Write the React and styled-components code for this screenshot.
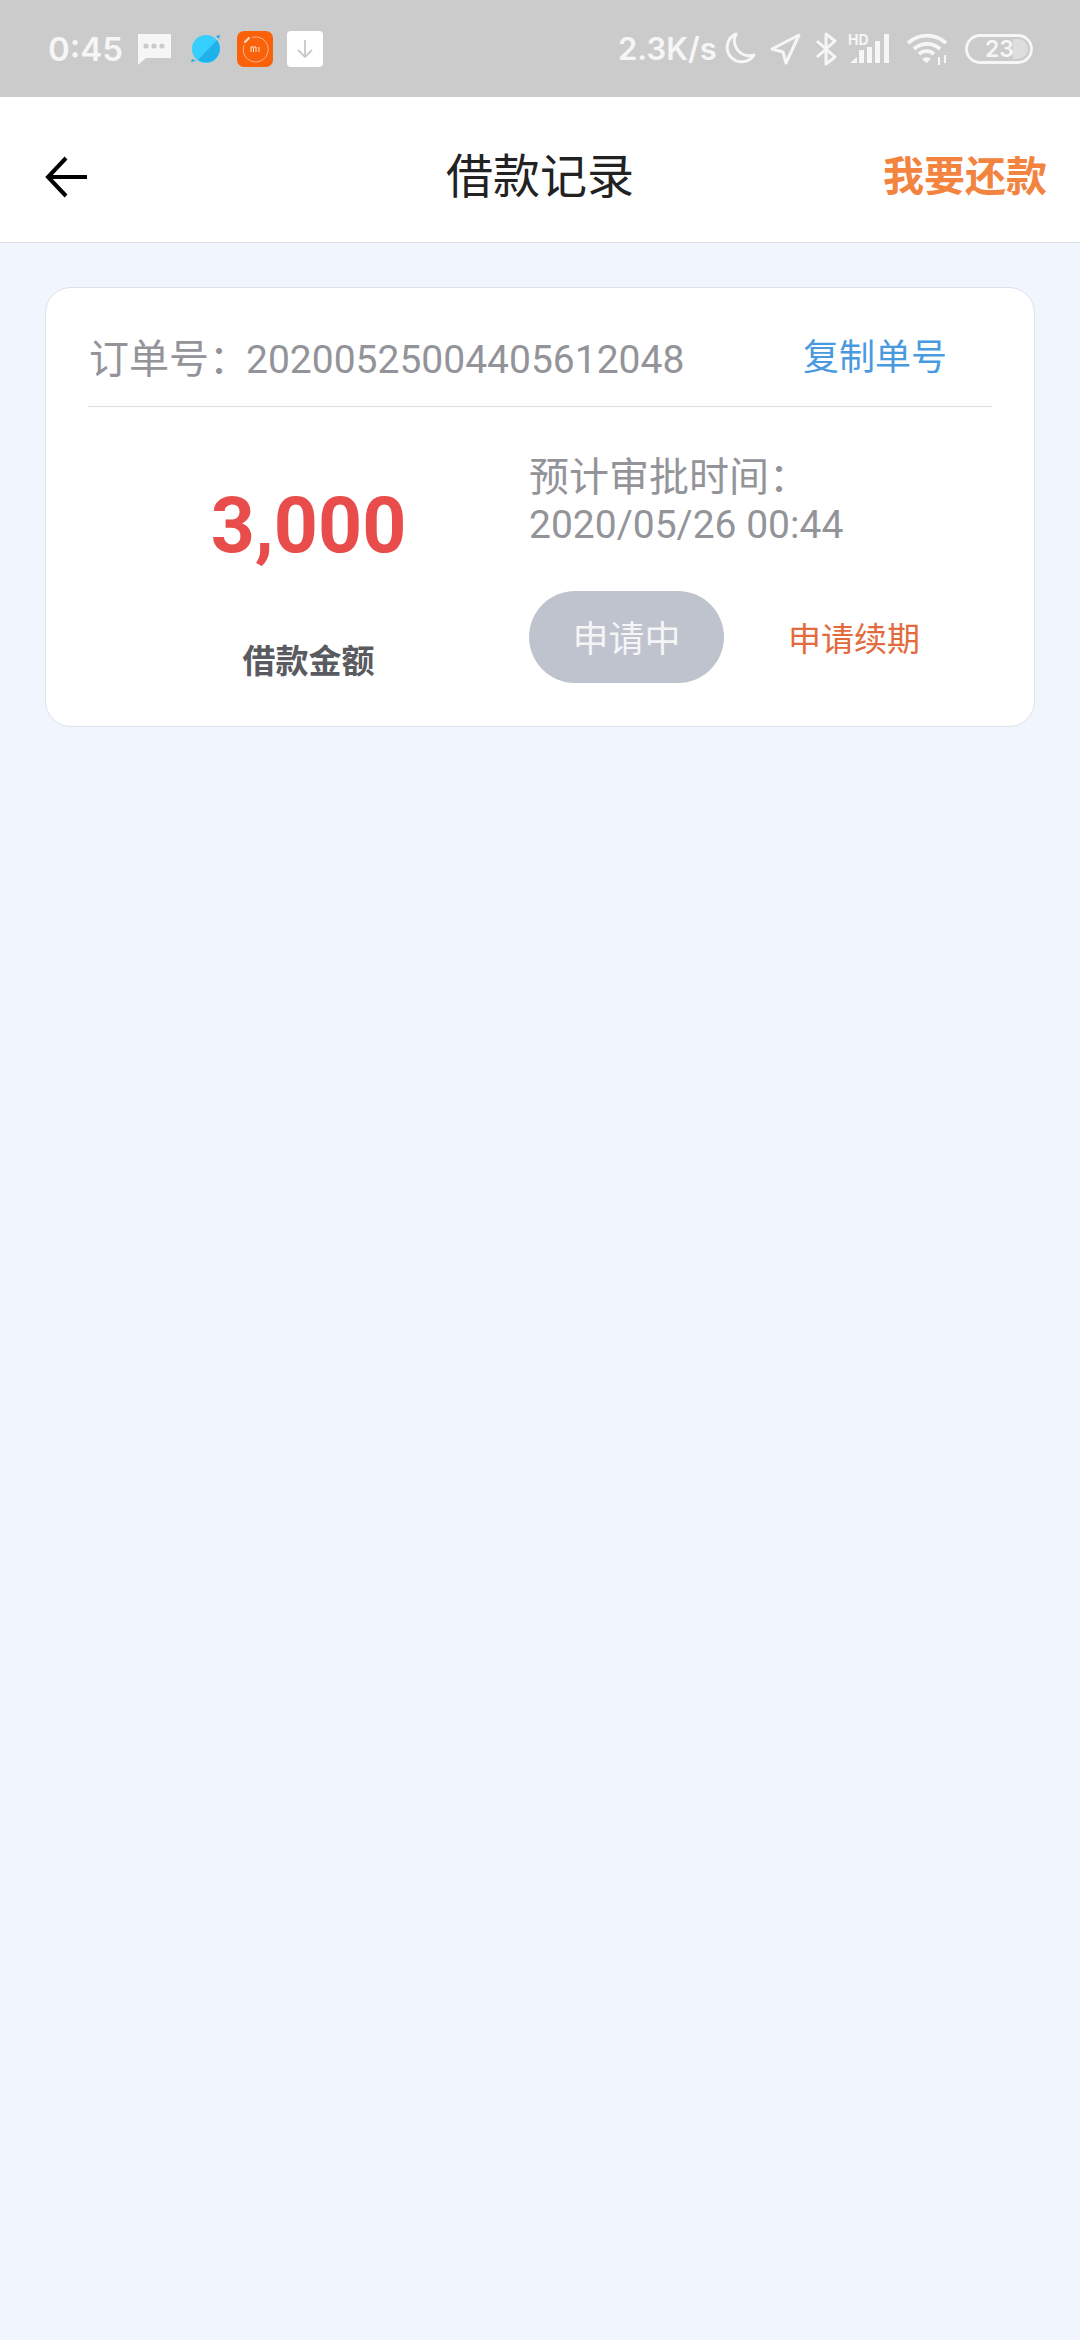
import React from "react";
import styled, { createGlobalStyle } from "styled-components";

const FONT = `Roboto, "Noto Sans CJK SC", sans-serif`;

const GlobalStyle = createGlobalStyle`
	html, body {
		margin: 0;
		padding: 0;
		background: #f1f5fd;
		font-family: ${FONT};
	}
`;

const S = {
	Page: styled.div`
		width: 1080px;
		height: 2340px;
		overflow: hidden;
		background: #f1f5fd;
		display: flex;
		flex-direction: column;
	`,
	StatusBar: styled.div`
		height: 97px;
		flex: none;
		padding: 0 47px 0 48px;
		box-sizing: border-box;
		background: #cbcbcb;
		display: flex;
		align-items: center;
		justify-content: space-between;
		color: #f6f6f6;
	`,
	StatusGroup: styled.div`
		display: flex;
		align-items: center;
	`,
	Time: styled.span`
		font: 600 33px Inter, sans-serif;
		width: 72px;
	`,
	Speed: styled.span`
		font: 600 31px Inter, sans-serif;
		width: 95px;
		white-space: nowrap;
	`,
	Glyph: styled.svg`
		flex: none;
		display: block;
		overflow: visible;
		margin-left: ${(p) => p.$left || 0}px;
	`,
	Header: styled.div`
		height: 146px;
		flex: none;
		box-sizing: border-box;
		padding: 6px 33px 0;
		background: #fff;
		border-bottom: 1px solid #dcdde4;
		display: grid;
		grid-template-columns: 1fr auto 1fr;
		align-items: center;
	`,
	BackButton: styled.div`
		display: flex;
		align-items: center;
		margin: 9px 0 0 11px;
	`,
	Title: styled.div`
		font-size: 47px;
		color: #222;
	`,
	RepayLink: styled.div`
		justify-self: end;
		font-size: 41px;
		font-weight: 700;
		color: #f3843f;
	`,
	Content: styled.div`
		padding: 44px 45px;
	`,
	Card: styled.div`
		height: 440px;
		box-sizing: border-box;
		padding: 0 42px;
		background: #fff;
		border: 1px solid #dfe1e8;
		border-radius: 26px;
		display: flex;
		flex-direction: column;
	`,
	OrderRow: styled.div`
		height: 119px;
		flex: none;
		box-sizing: border-box;
		padding: 18px 45px 0 1px;
		border-bottom: 1px solid #dfe0e4;
		display: flex;
		align-items: center;
		justify-content: space-between;
	`,
	OrderNo: styled.div`
		font-size: 40px;
		color: #939499;
		white-space: nowrap;
		span {
			font-size: 39px;
			margin-left: -3px;
		}
	`,
	CopyLink: styled.div`
		font-size: 36px;
		color: #4a9ae0;
		margin-top: -4px;
	`,
	CardBody: styled.div`
		flex: 1;
		display: grid;
		grid-template-columns: 441px 1fr;
	`,
	AmountCol: styled.div`
		display: flex;
		flex-direction: column;
		align-items: center;
		padding-top: 72px;
	`,
	Amount: styled.div`
		font-size: 77px;
		line-height: 94px;
		font-weight: 700;
		color: #e84c4b;
	`,
	AmountLabel: styled.div`
		margin-top: 66px;
		font-size: 33px;
		line-height: 46px;
		font-weight: 700;
		color: #5a5b60;
	`,
	InfoCol: styled.div`
		display: flex;
		flex-direction: column;
		padding-top: 47px;
	`,
	InfoText: styled.div`
		font-size: ${(p) => p.$size || 40}px;
		line-height: ${(p) => p.$line || 48}px;
		color: #939499;
	`,
	ActionRow: styled.div`
		display: flex;
		align-items: center;
		gap: 64px;
		margin-top: 42px;
	`,
	StatusPill: styled.div`
		width: 195px;
		height: 92px;
		flex: none;
		border-radius: 46px;
		background: #bfc3cd;
		color: #f4f5f7;
		font-size: 36px;
		padding-bottom: 2px;
		box-sizing: border-box;
		display: flex;
		align-items: center;
		justify-content: center;
	`,
	RenewLink: styled.div`
		font-size: 33px;
		color: #e26a3c;
	`,
};

const White = "#f6f6f6";

function NotificationIcons() {
	return (
		<S.StatusGroup>
			<S.Time>0:45</S.Time>
			<S.Glyph $left={17} width="34" height="32" viewBox="0 0 34 32">
				<path d="M1 1h33v24H9l-8 7z" fill={White} />
				<circle cx="9" cy="13" r="2.6" fill="#cbcbcb" />
				<circle cx="17" cy="13" r="2.6" fill="#cbcbcb" />
				<circle cx="25" cy="13" r="2.6" fill="#cbcbcb" />
			</S.Glyph>
			<S.Glyph $left={19} width="32" height="30" viewBox="0 0 32 30">
				<circle cx="16" cy="15" r="14" fill="#36cfff" />
				<path d="M27 6A14 14 0 0 1 8 26z" fill="#1fb2ea" />
				<path d="M26 2l4-1-1 4zM2 25l4 2-5 1z" fill="#1fa9de" />
			</S.Glyph>
			<S.Glyph $left={15} width="36" height="36" viewBox="0 0 36 36">
				<rect width="36" height="36" rx="7" fill="#f9620a" />
				<path d="M15 6.500A12.500 12.500 0 1 1 7 14" fill="none" stroke="#ffc9a6" strokeWidth="0.8" />
				<path d="M8 11l4-4" stroke="#ffd9c2" strokeWidth="2.2" strokeLinecap="round" />
				<path d="M14 21v-5h5v5M16.500 17v4M22 16v5" fill="none" stroke="#ffe2d0" strokeWidth="1" />
			</S.Glyph>
			<S.Glyph $left={14} width="36" height="36" viewBox="0 0 36 36">
				<rect width="36" height="36" rx="4" fill="#fff" />
				<path d="M18 9v17M11 19l7 7 7-7" fill="none" stroke="#c9c9c9" strokeWidth="1.8" />
			</S.Glyph>
		</S.StatusGroup>
	);
}

function SystemIcons() {
	return (
		<S.StatusGroup>
			<S.Speed>2.3K/s</S.Speed>
			<S.Glyph $left={10} width="33" height="33" viewBox="0 0 33 33" fill="none" stroke={White} strokeWidth="3">
				<path d="M13 2A14.500 14.500 0 1 0 31 23 15 15 0 0 1 13 2z" strokeLinejoin="round" />
			</S.Glyph>
			<S.Glyph $left={14} width="31" height="31" viewBox="0 0 31 31" fill="none" stroke={White} strokeWidth="3" strokeLinejoin="round">
				<path d="M29 2L2 16l11 3 3 11z" />
			</S.Glyph>
			<S.Glyph $left={14} width="22" height="34" viewBox="0 0 22 34" fill="none" stroke={White} strokeWidth="3" strokeLinejoin="round">
				<path d="M2 9l18 16-9 7V2l9 7L2 25" />
			</S.Glyph>
			<S.Glyph $left={11} width="42" height="31" viewBox="0 0 42 31" fill={White}>
				<text x="0" y="12" fontSize="14" fontWeight="700" fontFamily="Inter, sans-serif">HD</text>
				<path d="M2 30l7-6v6zM11 17h5v13h-5zM19 14h5v16h-5zM27 8h5v22h-5zM36 1h5v29h-5z" />
			</S.Glyph>
			<S.Glyph $left={16} width="44" height="32" viewBox="0 0 44 32" fill="none" stroke={White} strokeWidth="3.8">
				<path d="M2 10a28 28 0 0 1 38 0M8 16a19 19 0 0 1 26 0" />
				<path d="M13 21a11 11 0 0 1 15 0" />
				<path d="M16 26a7 7 0 0 1 9 0l-4.500 4z" fill={White} stroke="none" />
				<path d="M33 24v8M39 22v8" strokeWidth="2.2" />
			</S.Glyph>
			<S.Glyph $left={15} width="68" height="30" viewBox="0 0 68 30">
				<rect x="1.500" y="1.500" width="65" height="27" rx="13.500" fill="none" stroke={White} strokeWidth="2.8" />
				<path d="M48 5h5a10 10 0 0 1 0 20h-5z" fill="#dedede" />
				<text x="20" y="23" fontSize="23" fontWeight="600" fontFamily="Inter, sans-serif" fill={White}>23</text>
			</S.Glyph>
		</S.StatusGroup>
	);
}

function App() {
	return (
		<S.Page>
			<GlobalStyle />
			<S.StatusBar>
				<NotificationIcons />
				<SystemIcons />
			</S.StatusBar>
			<S.Header>
				<S.BackButton>
					<svg width="44" height="42" viewBox="0 0 44 42" fill="none" stroke="#000" strokeWidth="4">
						<path d="M22 2L4 21l18 19M4 21h39" />
					</svg>
				</S.BackButton>
				<S.Title>借款记录</S.Title>
				<S.RepayLink>我要还款</S.RepayLink>
			</S.Header>
			<S.Content>
				<S.Card>
					<S.OrderRow>
						<S.OrderNo>
							订单号：
							<span>20200525004405612048</span>
						</S.OrderNo>
						<S.CopyLink>复制单号</S.CopyLink>
					</S.OrderRow>
					<S.CardBody>
						<S.AmountCol>
							<S.Amount>3,000</S.Amount>
							<S.AmountLabel>借款金额</S.AmountLabel>
						</S.AmountCol>
						<S.InfoCol>
							<S.InfoText $line={47}>预计审批时间：</S.InfoText>
							<S.InfoText $size={39}>2020/05/26 00:44</S.InfoText>
							<S.ActionRow>
								<S.StatusPill>申请中</S.StatusPill>
								<S.RenewLink>申请续期</S.RenewLink>
							</S.ActionRow>
						</S.InfoCol>
					</S.CardBody>
				</S.Card>
			</S.Content>
		</S.Page>
	);
}

export default App;
